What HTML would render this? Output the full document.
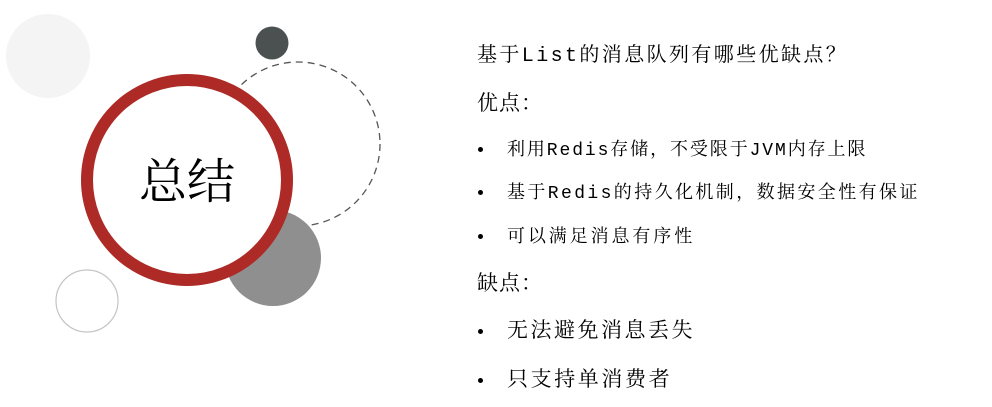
<!DOCTYPE html>
<html><head><meta charset="utf-8"><style>
body{margin:0;width:992px;height:407px;background:#fff;position:relative;overflow:hidden;font-family:"Liberation Mono","Noto Serif CJK SC",serif;color:#000}
.t{position:absolute;white-space:nowrap;line-height:1}
.b{position:absolute;width:5px;height:5px;border-radius:50%;background:#000}
</style></head><body>
<svg width="400" height="407" style="position:absolute;left:0;top:0">
<circle cx="48" cy="56" r="42" fill="#f4f4f4"/>
<circle cx="272" cy="43" r="16.5" fill="#4b5150"/>
<circle cx="298" cy="144" r="82" fill="none" stroke="#555" stroke-width="1.3" stroke-dasharray="7 5"/>
<circle cx="273" cy="258" r="48" fill="#8f8f8f"/>
<circle cx="187" cy="180" r="100" fill="#fff" stroke="#ad2a27" stroke-width="12"/>
<circle cx="87" cy="301" r="31" fill="none" stroke="#c4c4c4" stroke-width="1.2"/>
<text x="187" y="198" text-anchor="middle" font-size="48" font-family="Noto Serif CJK SC,serif" fill="#000">总结</text>
</svg>
<div class="t" style="left:477px;top:47px;font-size:20px;letter-spacing:2.4px">基于List的消息队列有哪些优缺点？</div>
<div class="t" style="left:477px;top:95px;font-size:21px;letter-spacing:1px">优点：</div>
<div class="b" style="left:478px;top:147px"></div>
<div class="t" style="left:507px;top:142px;font-size:18px;letter-spacing:1.9px">利用Redis存储，不受限于JVM内存上限</div>
<div class="b" style="left:478px;top:190px"></div>
<div class="t" style="left:507px;top:185px;font-size:18px;letter-spacing:2.4px">基于Redis的持久化机制，数据安全性有保证</div>
<div class="b" style="left:478px;top:234px"></div>
<div class="t" style="left:507px;top:229px;font-size:18px;letter-spacing:2.9px">可以满足消息有序性</div>
<div class="t" style="left:477px;top:275px;font-size:21px;letter-spacing:1px">缺点：</div>
<div class="b" style="left:478px;top:329px"></div>
<div class="t" style="left:507px;top:322px;font-size:21px;letter-spacing:2.5px">无法避免消息丢失</div>
<div class="b" style="left:478px;top:378px"></div>
<div class="t" style="left:507px;top:371px;font-size:21px;letter-spacing:2.6px">只支持单消费者</div>
</body></html>
